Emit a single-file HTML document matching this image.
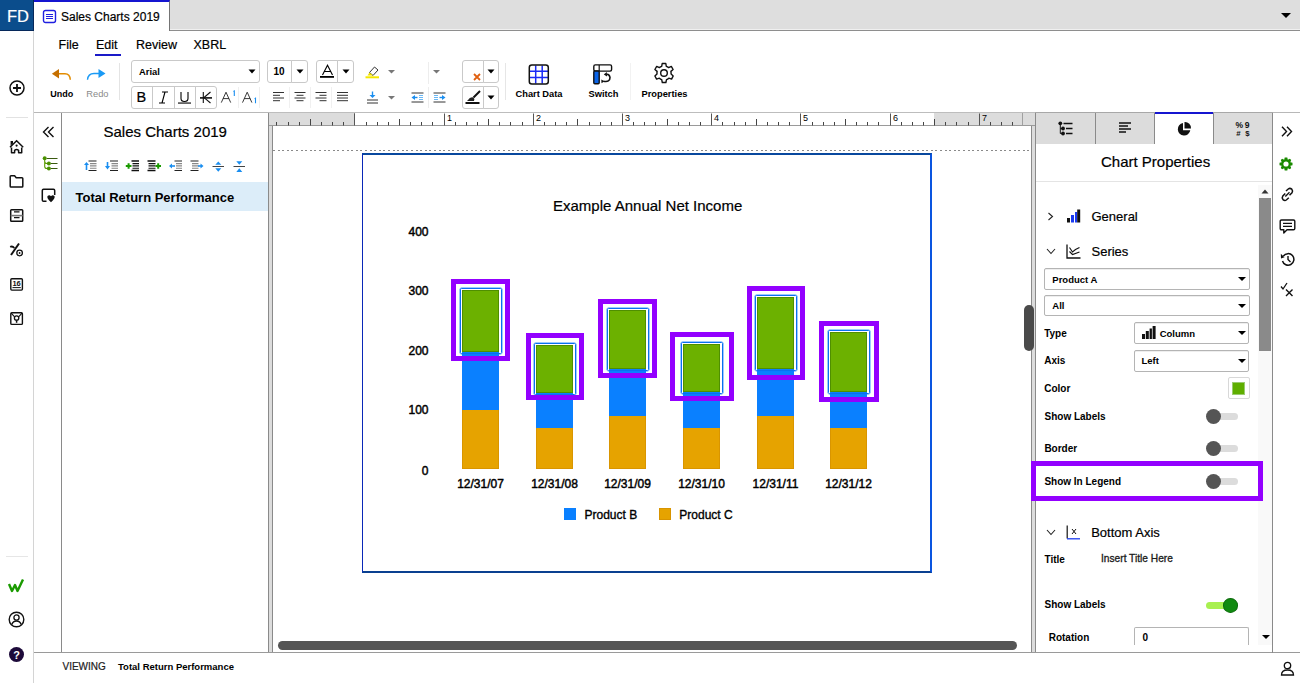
<!DOCTYPE html>
<html><head><meta charset="utf-8">
<style>
*{margin:0;padding:0;box-sizing:border-box}
html,body{width:1300px;height:683px;overflow:hidden;background:#fff;font-family:"Liberation Sans",sans-serif;color:#000}
.a{position:absolute}
.t{position:absolute;line-height:1;white-space:nowrap;-webkit-text-stroke:0.2px currentColor}
.t.b,.t[style*="font-weight:bold"]{-webkit-text-stroke:0}
.b{font-weight:bold}
svg{position:absolute;overflow:visible}
.box{position:absolute;border:1px solid #c9c9c9;border-radius:3px;background:#fff}
.sep{position:absolute;width:1px;background:#e6e6e6}
.tri{position:absolute;width:0;height:0;border-left:4px solid transparent;border-right:4px solid transparent;border-top:4px solid #000}
.trig{position:absolute;width:0;height:0;border-left:4px solid transparent;border-right:4px solid transparent;border-top:4px solid #777}
</style></head><body>

<!-- TOP BAR -->
<div class="a" style="left:0;top:0;width:1300px;height:31px;background:#dedede;border-bottom:1px solid #8e8e8e"></div>
<div class="a" style="left:170px;top:29px;width:1130px;height:1px;background:#f0f0f0"></div>
<div class="a" style="left:0;top:0;width:34px;height:31px;background:#0b4d8c;border-right:1px solid #06285a;border-bottom:1px solid #06285a"></div>
<div class="t" style="left:7px;top:7.5px;font-size:16.5px;color:#fff">FD</div>
<div class="a" style="left:34px;top:0;width:136px;height:31px;background:#fff;border-top:2px solid #1515d0;border-right:1px solid #747474"></div>
<svg style="left:42px;top:9px" width="15" height="15" viewBox="0 0 15 15"><rect x="1.5" y="1.5" width="12" height="12" rx="2" fill="none" stroke="#2020e0" stroke-width="1.4"/><path d="M4 5.5h7M4 7.5h7M4 9.5h7" stroke="#2020e0" stroke-width="1.2"/></svg>
<div class="t" style="left:61px;top:10.6px;font-size:12px">Sales Charts 2019</div>
<div class="tri" style="left:1281px;top:13px;border-left-width:5px;border-right-width:5px;border-top-width:5px"></div>

<!-- LEFT SIDEBAR -->
<div class="a" style="left:33px;top:31px;width:1px;height:652px;background:#d4d4d4"></div>

<!-- MENU -->
<div class="t" style="left:58.5px;top:38.6px;font-size:12.5px">File</div>
<div class="t" style="left:96px;top:38.6px;font-size:12.5px">Edit</div>
<div class="a" style="left:95px;top:53.5px;width:26px;height:2px;background:#1a1ac8"></div>
<div class="t" style="left:136px;top:38.6px;font-size:12.5px">Review</div>
<div class="t" style="left:193.5px;top:38.6px;font-size:12.5px">XBRL</div>

<!-- TOOLBAR -->
<svg style="left:51px;top:68px" width="21" height="14" viewBox="0 0 21 14"><path d="M7 5.7 H14 Q19 5.7 19.3 11.8" fill="none" stroke="#e38c00" stroke-width="1.5"/><path d="M0.9 5.7 L8 1 L8 10.5 Z" fill="#c56f00"/></svg>
<div class="t b" style="left:50.3px;top:89.8px;font-size:9px">Undo</div>
<svg style="left:86px;top:68px" width="21" height="14" viewBox="0 0 21 14"><path d="M14 5.5 H8 Q2 5.5 1.5 11.8" fill="none" stroke="#1a9af5" stroke-width="1.4"/><path d="M19.5 5.5 L12.5 1 L12.5 10 Z" fill="#1a9af5"/></svg>
<div class="t" style="left:86.3px;top:89.6px;font-size:9.3px;color:#8a8a8a;-webkit-text-stroke:0">Redo</div>
<div class="sep" style="left:119px;top:63px;height:37px;background:#e4e4e4"></div>

<div class="box" style="left:131px;top:60px;width:129px;height:23px"></div>
<div class="t" style="left:139px;top:67px;font-size:9.4px;font-weight:bold">Arial</div>
<svg style="left:248px;top:69px" width="8" height="5" viewBox="0 0 8 5"><path d="M0.5 0.5 H7.5 L4 4.5 Z" fill="#000"/></svg>

<div class="box" style="left:267px;top:60px;width:25px;height:23px;border-radius:3px 0 0 3px"></div>
<div class="box" style="left:291px;top:60px;width:17px;height:23px;border-radius:0 3px 3px 0"></div>
<div class="t b" style="left:273.5px;top:66.5px;font-size:10px">10</div>
<svg style="left:296px;top:69px" width="8" height="5" viewBox="0 0 8 5"><path d="M0.5 0.5 H7.5 L4 4.5 Z" fill="#000"/></svg>

<div class="box" style="left:316px;top:60px;width:22px;height:23px;border-radius:3px 0 0 3px"></div>
<div class="box" style="left:337px;top:60px;width:17px;height:23px;border-radius:0 3px 3px 0"></div>
<svg style="left:320px;top:64px" width="15" height="14" viewBox="0 0 15 14"><path d="M2.5 11 L7.5 1.2 L12.5 11 M4.3 7.5 H10.7" fill="none" stroke="#000" stroke-width="1.1"/><rect x="0" y="12" width="14" height="1.8" fill="#000"/></svg>
<svg style="left:342px;top:69px" width="8" height="5" viewBox="0 0 8 5"><path d="M0.5 0.5 H7.5 L4 4.5 Z" fill="#000"/></svg>

<!-- highlighter -->
<svg style="left:364px;top:65px" width="17" height="14" viewBox="0 0 17 14"><path d="M5.5 7.5 L10.5 2 L14 5 L9 10.5 Z" fill="#fff" stroke="#333" stroke-width="1"/><path d="M5.5 7.5 L9 10.5 L6 10.5 L3.5 10.5 Z" fill="#f0e000"/><rect x="1.5" y="11.3" width="13.5" height="2" fill="#f5e800"/></svg>
<svg style="left:388px;top:70px" width="7" height="4" viewBox="0 0 7 4"><path d="M0 0 H7 L3.5 3.5 Z" fill="#777"/></svg>
<div class="sep" style="left:428px;top:62px;height:22px;background:#ededed"></div>
<svg style="left:433px;top:70px" width="7" height="4" viewBox="0 0 7 4"><path d="M0 0 H7 L3.5 3.5 Z" fill="#777"/></svg>

<div class="box" style="left:462px;top:60px;width:22px;height:23px;border-radius:3px 0 0 3px"></div>
<div class="box" style="left:483px;top:60px;width:16px;height:23px;border-radius:0 3px 3px 0"></div>
<svg style="left:473px;top:72.5px" width="8" height="8" viewBox="0 0 8 8"><path d="M1 1 L7 7 M7 1 L1 7" stroke="#e06010" stroke-width="1.8"/></svg>
<svg style="left:487px;top:69px" width="8" height="5" viewBox="0 0 8 5"><path d="M0.5 0.5 H7.5 L4 4.5 Z" fill="#000"/></svg>

<!-- row 2 -->
<div class="box" style="left:131px;top:86px;width:22px;height:23px;border-radius:3px 0 0 3px"></div>
<div class="box" style="left:152px;top:86px;width:23px;height:23px;border-radius:0"></div>
<div class="box" style="left:174px;top:86px;width:22px;height:23px;border-radius:0"></div>
<div class="box" style="left:195px;top:86px;width:22px;height:23px;border-radius:0 3px 3px 0"></div>
<div class="t" style="left:136.5px;top:90.3px;font-size:14.5px">B</div>
<svg style="left:157px;top:91px" width="13" height="13" viewBox="0 0 13 13"><path d="M5 1 H11 M8 1 L5 12 M2 12 H8" fill="none" stroke="#000" stroke-width="1.1"/></svg>
<svg style="left:177px;top:91px" width="15" height="13" viewBox="0 0 15 13"><path d="M4 1 V7.5 Q4 10.5 7.5 10.5 Q11 10.5 11 7.5 V1" fill="none" stroke="#000" stroke-width="1.1"/><rect x="1" y="11.5" width="13" height="1.1" fill="#000"/></svg>
<svg style="left:197px;top:89px" width="18" height="16" viewBox="197 89 18 16"><path d="M203.3 92 V103 M210.5 92 L204 97.6 L210.5 103" fill="none" stroke="#111" stroke-width="1.1"/><path d="M200 97.9 H212" stroke="#111" stroke-width="1.6"/></svg>
<svg style="left:219px;top:89px" width="40" height="16" viewBox="219 89 40 16"><path d="M221.3 102.6 L226 92.2 L230.7 102.6 M223 98.6 H229" fill="none" stroke="#222" stroke-width="0.9"/><path d="M233.4 91.5 L234.3 91 V96" fill="none" stroke="#1a8ef0" stroke-width="1.1"/><path d="M242.5 102.6 L247.2 92.2 L251.9 102.6 M244.2 98.6 H250.2" fill="none" stroke="#222" stroke-width="0.9"/><path d="M254.6 98.8 L255.5 98.3 V103.3" fill="none" stroke="#1a8ef0" stroke-width="1.1"/></svg>
<div class="sep" style="left:238px;top:87px;height:21px;background:#efefef"></div>

<div class="sep" style="left:259px;top:87px;height:21px;background:#efefef"></div>

<svg style="left:272px;top:91px" width="80" height="11" viewBox="0 0 80 11"><g stroke="#333" stroke-width="1"><path d="M1 1.5 H12 M1 4.3 H8 M1 7 H12 M1 9.7 H8"/><path d="M22.5 1.5 H33.5 M24.5 4.3 H31.5 M22.5 7 H33.5 M24.5 9.7 H31.5"/><path d="M43.5 1.5 H54.5 M47.5 4.3 H54.5 M43.5 7 H54.5 M47.5 9.7 H54.5"/><path d="M65 1.5 H76 M65 4.3 H76 M65 7 H76 M65 9.7 H76"/></g></svg>
<div class="sep" style="left:289px;top:87px;height:21px;background:#f0f0f0"></div>
<div class="sep" style="left:310px;top:87px;height:21px;background:#f0f0f0"></div>
<div class="sep" style="left:331px;top:87px;height:21px;background:#f0f0f0"></div>

<svg style="left:366px;top:91px" width="13" height="13" viewBox="0 0 13 13"><path d="M6.5 0.5 V5" stroke="#1a8ef0" stroke-width="1.4"/><path d="M3.5 4 H9.5 L6.5 7 Z" fill="#1a8ef0"/><path d="M1 9 H12 M1 12 H12" stroke="#333" stroke-width="1"/></svg>
<svg style="left:388px;top:96px" width="7" height="4" viewBox="0 0 7 4"><path d="M0 0 H7 L3.5 3.5 Z" fill="#777"/></svg>
<svg style="left:411px;top:92px" width="13" height="11" viewBox="0 0 13 11"><path d="M0.5 1 H12.5 M0.5 10 H12.5" stroke="#333" stroke-width="1"/><path d="M0.5 5.5 L4 3 V8 Z" fill="#1a8ef0"/><path d="M3 5.5 H6.5" stroke="#1a8ef0" stroke-width="1.4"/><path d="M8 3.5 H12 M8 5.5 H12 M8 7.5 H12" stroke="#6ab8f5" stroke-width="1.2"/></svg>
<div class="sep" style="left:428px;top:87px;height:21px;background:#ededed"></div>
<svg style="left:433px;top:92px" width="13" height="11" viewBox="0 0 13 11"><path d="M0.5 1 H12.5 M0.5 10 H12.5" stroke="#333" stroke-width="1"/><path d="M12.5 5.5 L9 3 V8 Z" fill="#1a8ef0"/><path d="M6.5 5.5 H10" stroke="#1a8ef0" stroke-width="1.4"/><path d="M1 3.5 H5 M1 5.5 H5 M1 7.5 H5" stroke="#6ab8f5" stroke-width="1.2"/></svg>

<div class="box" style="left:462px;top:86px;width:22px;height:23px;border-radius:3px 0 0 3px"></div>
<div class="box" style="left:483px;top:86px;width:16px;height:23px;border-radius:0 3px 3px 0"></div>
<svg style="left:465px;top:90px" width="16" height="15" viewBox="0 0 16 15"><path d="M15 1 L8.5 7.5" stroke="#111" stroke-width="2"/><path d="M8.5 7.5 Q5 6.5 3 10 L2 11 H9 Q10 9 8.5 7.5 Z" fill="#222"/><rect x="0.5" y="12" width="14" height="2" fill="#111"/></svg>
<svg style="left:487px;top:95px" width="8" height="5" viewBox="0 0 8 5"><path d="M0.5 0.5 H7.5 L4 4.5 Z" fill="#000"/></svg>

<div class="sep" style="left:505px;top:63px;height:37px;background:#e6e6e6"></div>
<svg style="left:527px;top:63px" width="23" height="23" viewBox="527 63 23 23"><path d="M535.7 65.5 V83.5 M542.2 65.5 V83.5 M529.5 71.2 H548 M529.5 77.6 H548" stroke="#1a2af5" stroke-width="1.5"/><rect x="529.3" y="64.9" width="19" height="19" rx="2.5" fill="none" stroke="#111" stroke-width="1.5"/></svg>
<div class="t b" style="left:515.5px;top:89.7px;font-size:9.3px">Chart Data</div>
<svg style="left:591px;top:63px" width="23" height="23" viewBox="591 63 23 23"><rect x="593.8" y="64.9" width="17.8" height="6.2" rx="1.5" fill="#fff" stroke="#111" stroke-width="1.4"/><path d="M599.2 65 V71" stroke="#111" stroke-width="1.2"/><rect x="593.8" y="71" width="5.4" height="12.8" rx="1" fill="#0a64e8" stroke="#111" stroke-width="1.4"/><path d="M603.5 81.2 Q610 82.5 610 77.5 Q609.5 74 606.5 74.3" fill="none" stroke="#111" stroke-width="1.6"/><path d="M606.8 72 L603.8 74.5 L607 76.6 Z" fill="#111"/><path d="M601.3 79.5 L604.5 81.2 L601.5 83.2 Z" fill="#111"/></svg>
<div class="t b" style="left:588.5px;top:89.7px;font-size:9.3px">Switch</div>
<div class="sep" style="left:630px;top:63px;height:37px;background:#f2f2f2"></div>
<svg style="left:652px;top:62px" width="24" height="24" viewBox="0 0 24 24"><path d="M10.2 1.5 H13.8 L14.3 4.4 Q15.6 4.9 16.6 5.6 L19.3 4.4 L21.1 7.5 L18.9 9.4 Q19.1 10.6 19.1 12 L21.2 13.9 L19.6 17.1 L16.8 16.2 Q15.8 17.1 14.5 17.6 L13.9 20.5 H10.3 L9.7 17.6 Q8.4 17.1 7.4 16.2 L4.6 17.1 L2.9 14 L5 12 Q4.9 10.6 5.1 9.4 L2.9 7.5 L4.7 4.4 L7.4 5.6 Q8.4 4.9 9.7 4.4 Z" fill="none" stroke="#111" stroke-width="1.4" stroke-linejoin="round"/><circle cx="12" cy="11" r="3.3" fill="none" stroke="#111" stroke-width="1.4"/></svg>
<div class="t b" style="left:641.5px;top:89.7px;font-size:9.3px">Properties</div>

<div class="a" style="left:34px;top:112px;width:1266px;height:1px;background:#b8b8b8"></div>


<!-- SIDEBAR ICONS -->
<svg style="left:9px;top:80px" width="16" height="16" viewBox="0 0 16 16"><circle cx="8" cy="8" r="7" fill="none" stroke="#111" stroke-width="1.5"/><path d="M8 4 V12 M4 8 H12" stroke="#111" stroke-width="1.8"/></svg>
<div class="a" style="left:6px;top:117px;width:22px;height:1px;background:#e2e2e2"></div>
<svg style="left:8px;top:138px" width="18" height="18" viewBox="8 138 18 18"><path d="M10 147.3 L16.6 140.8 L23.2 147.3" fill="none" stroke="#111" stroke-width="1.5"/><path d="M10.6 141 H13 V143.5 L10.6 145.8 Z" fill="#111"/><circle cx="16.6" cy="145.6" r="1.1" fill="#111"/><path d="M11.5 147.5 V152.7 H14.6 V150.3 Q16.6 148.8 18.6 150.3 V152.7 H21.7 V147.5" fill="none" stroke="#111" stroke-width="1.5" stroke-linejoin="round"/></svg>
<svg style="left:8px;top:173px" width="18" height="17" viewBox="8 173 18 17"><path d="M11 175.7 H14.6 L16.2 177.7 H22 Q22.8 177.7 22.8 178.5 V186.2 Q22.8 187 22 187 H11 Q10.2 187 10.2 186.2 V176.5 Q10.2 175.7 11 175.7 Z" fill="none" stroke="#111" stroke-width="1.5" stroke-linejoin="round"/></svg>
<svg style="left:8px;top:207px" width="18" height="17" viewBox="8 207 18 17"><rect x="10.7" y="209.7" width="12" height="11.6" rx="0.8" fill="none" stroke="#111" stroke-width="1.5"/><path d="M10.7 215.6 H22.7" stroke="#777" stroke-width="1.6"/><path d="M14 211.8 H19.5 M14 217.6 H19.5" stroke="#111" stroke-width="1.2"/></svg>
<svg style="left:8px;top:241px" width="18" height="18" viewBox="8 241 18 18"><path d="M10.2 246.8 Q12.5 245.6 14.3 248" fill="none" stroke="#111" stroke-width="1.9"/><path d="M11 255 L19 243.5" stroke="#111" stroke-width="2"/><circle cx="19.6" cy="253" r="2.8" fill="none" stroke="#111" stroke-width="1.3"/><circle cx="19.6" cy="253" r="0.9" fill="#111"/></svg>
<svg style="left:8px;top:276px" width="18" height="17" viewBox="8 276 18 17"><rect x="10.8" y="278.7" width="11.6" height="11.4" rx="1" fill="none" stroke="#111" stroke-width="1.4"/><path d="M12.5 287.6 H20.8" stroke="#111" stroke-width="1"/><text x="16.6" y="286" font-size="7.5" font-family="Liberation Sans" font-weight="bold" text-anchor="middle" fill="#111">16</text></svg>
<svg style="left:8px;top:310px" width="18" height="17" viewBox="8 310 18 17"><rect x="10.8" y="312.7" width="11.6" height="11.7" rx="1" fill="none" stroke="#111" stroke-width="1.4"/><path d="M11.2 313.2 L14.6 316.8 M22 313.2 L18.6 316.8" stroke="#111" stroke-width="1.1"/><circle cx="16.6" cy="318" r="2.2" fill="none" stroke="#111" stroke-width="1.3"/><path d="M16.6 320.2 V322.8" stroke="#111" stroke-width="1.5"/></svg>
<div class="a" style="left:6px;top:556px;width:22px;height:1px;background:#e6e6e6"></div>
<svg style="left:8px;top:578px" width="16" height="15" viewBox="0 0 16 15"><path d="M1 6 L4 13 L7 7 L9.5 13 L15 1.5" fill="none" stroke="#1a9a00" stroke-width="2.4" stroke-linejoin="round"/></svg>
<svg style="left:8px;top:611px" width="17" height="17" viewBox="0 0 17 17"><circle cx="8.5" cy="8.5" r="7.3" fill="none" stroke="#111" stroke-width="1.4"/><circle cx="8.5" cy="6.5" r="2.6" fill="none" stroke="#111" stroke-width="1.3"/><path d="M3.8 13.5 Q5 10 8.5 10 Q12 10 13.2 13.5" fill="none" stroke="#111" stroke-width="1.3"/></svg>
<svg style="left:8px;top:646px" width="17" height="17" viewBox="0 0 17 17"><circle cx="8.5" cy="8.5" r="7.5" fill="#1d0a3a"/><text x="8.5" y="12.5" font-size="11" font-family="Liberation Sans" font-weight="bold" text-anchor="middle" fill="#fff">?</text></svg>

<!-- SECOND COLUMN (panel icons) -->
<div class="a" style="left:61px;top:113px;width:1px;height:540px;background:#8a8a8a"></div>
<svg style="left:42px;top:126px" width="13" height="12" viewBox="0 0 13 12"><path d="M6.5 1 L1.5 6 L6.5 11 M11.5 1 L6.5 6 L11.5 11" fill="none" stroke="#111" stroke-width="1.4"/></svg>
<svg style="left:42px;top:155px" width="17" height="16" viewBox="42 155 17 16"><path d="M44.7 158.5 V161.5 Q44.7 163.5 47 163.5 H48.9 M44.7 161.5 V166.5 Q44.7 168.5 47 168.5 H48.9" fill="none" stroke="#5a9a00" stroke-width="1.1"/><circle cx="44.7" cy="158.3" r="2" fill="#4a9000"/><circle cx="48.9" cy="163.5" r="2" fill="#4a9000"/><circle cx="48.9" cy="168.5" r="2" fill="#4a9000"/><path d="M47 158.5 H57.5 M51 163.5 H57.5 M51 168.5 H57.5" stroke="#3a5a10" stroke-width="1.2"/></svg>
<svg style="left:40px;top:187px" width="17" height="17" viewBox="40 187 17 17"><path d="M46.5 201.3 H43.5 Q42.3 201.3 42.3 200 V190.5 Q42.3 189.3 43.5 189.3 H53.5 Q54.7 189.3 54.7 190.5 V195" fill="none" stroke="#111" stroke-width="1.5"/><path d="M51 196.3 Q52.6 194.4 54.4 196 Q55.8 197.8 51 202.2 Q46.2 197.8 47.6 196 Q49.4 194.4 51 196.3 Z" fill="#111"/></svg>

<!-- NAV PANEL -->
<div class="a" style="left:62px;top:182px;width:206px;height:29px;background:#dcedf9"></div>
<div class="t" style="left:103.5px;top:123.8px;font-size:15px">Sales Charts 2019</div>
<svg style="left:80px;top:157px" width="170" height="18" viewBox="80 157 170 18"><path d="M88.5 161 H96.5 M88.5 170.5 H96.5" stroke="#222" stroke-width="1.1"/><path d="M90.0 163.6 H96.5 M90.0 165.9 H96.5 M90.0 168.2 H96.5" stroke="#888" stroke-width="1.1"/><path d="M86.5 170 V163.5" stroke="#1a8ef0" stroke-width="1.6"/><path d="M84 165 L86.5 162 L89 165 Z" fill="#1a8ef0"/><path d="M110 161 H118 M110 170.5 H118" stroke="#222" stroke-width="1.1"/><path d="M111.5 163.6 H118 M111.5 165.9 H118 M111.5 168.2 H118" stroke="#888" stroke-width="1.1"/><path d="M107.5 162 V167.5" stroke="#1a8ef0" stroke-width="1.6"/><path d="M105 166 L107.5 169.5 L110 166 Z" fill="#1a8ef0"/><path d="M131.5 161 H139 M131.5 170.5 H139" stroke="#111" stroke-width="1.3"/><path d="M132.5 163.6 H139 M132.5 165.9 H139 M132.5 168.2 H139" stroke="#111" stroke-width="1.1"/><path d="M125.8 166 H131.5 M128.6 163.2 V168.8" stroke="#1a9a00" stroke-width="2"/><path d="M147.5 161 H155.5 M147.5 170.5 H155.5" stroke="#111" stroke-width="1.3"/><path d="M148.5 163.6 H155.5 M148.5 165.9 H155.5 M148.5 168.2 H155.5" stroke="#111" stroke-width="1.1"/><path d="M155.5 166 H161 M158.2 163.2 V168.8" stroke="#1a9a00" stroke-width="2"/><path d="M174.5 161 H182 M174.5 170.5 H182" stroke="#222" stroke-width="1.1"/><path d="M176.0 163.6 H182 M176.0 165.9 H182 M176.0 168.2 H182" stroke="#888" stroke-width="1.1"/><path d="M170.5 166 H175" stroke="#1a8ef0" stroke-width="1.6"/><path d="M172 163.5 L169 166 L172 168.5 Z" fill="#1a8ef0"/><path d="M190.5 161 H198.5 M190.5 170.5 H198.5" stroke="#222" stroke-width="1.1"/><path d="M192.0 163.6 H198.5 M192.0 165.9 H198.5 M192.0 168.2 H198.5" stroke="#888" stroke-width="1.1"/><path d="M198 166 H202" stroke="#1a8ef0" stroke-width="1.6"/><path d="M200.5 163.5 L203.5 166 L200.5 168.5 Z" fill="#1a8ef0"/><path d="M212.5 166.5 H224" stroke="#444" stroke-width="1"/><path d="M215.3 164.8 L218.3 161.5 L221.3 164.8 Z M215.3 168.2 L218.3 171.8 L221.3 168.2 Z" fill="#1a8ef0"/><path d="M233.5 166.5 H245" stroke="#444" stroke-width="1"/><path d="M236.3 161.2 H242.3 L239.3 164.8 Z M236.3 172 H242.3 L239.3 168.2 Z" fill="#1a8ef0"/></svg>
<div class="t b" style="left:75.5px;top:190.5px;font-size:13px">Total Return Performance</div>
<div class="a" style="left:268px;top:113px;width:1px;height:540px;background:#8a8a8a"></div>
<div class="a" style="left:269px;top:126px;width:4px;height:527px;background:#dcdcdc;border-right:1px solid #8a8a8a"></div>

<!-- RULER -->
<div class="a" style="left:269px;top:112px;width:766px;height:14px;background:#fff;border-top:1px solid #bdbdbd;border-bottom:1px solid #9a9a9a"></div>
<div class="a" style="left:269px;top:113px;width:86px;height:12px;background:#dcdcdc;border-right:1px solid #a0a0a0"></div>
<div class="a" style="left:934px;top:113px;width:101px;height:12px;background:#dcdcdc"></div>
<div class="a" style="left:1022px;top:113px;width:1px;height:12px;background:#a0a0a0"></div>
<svg style="left:269px;top:113px" width="766" height="14" viewBox="0 0 766 14">
<path d="M7.5 9 V12.5" stroke="#444" stroke-width="1"/>
<path d="M19.5 9 V12.5" stroke="#444" stroke-width="1"/>
<path d="M30.5 9 V12.5" stroke="#444" stroke-width="1"/>
<path d="M41.5 6 V12.5" stroke="#444" stroke-width="1"/>
<path d="M52.5 9 V12.5" stroke="#444" stroke-width="1"/>
<path d="M63.5 9 V12.5" stroke="#444" stroke-width="1"/>
<path d="M74.5 9 V12.5" stroke="#444" stroke-width="1"/>
<path d="M85.5 0.5 V12.5" stroke="#555" stroke-width="1"/>
<path d="M97.5 9 V12.5" stroke="#444" stroke-width="1"/>
<path d="M108.5 9 V12.5" stroke="#444" stroke-width="1"/>
<path d="M119.5 9 V12.5" stroke="#444" stroke-width="1"/>
<path d="M130.5 6 V12.5" stroke="#444" stroke-width="1"/>
<path d="M141.5 9 V12.5" stroke="#444" stroke-width="1"/>
<path d="M152.5 9 V12.5" stroke="#444" stroke-width="1"/>
<path d="M163.5 9 V12.5" stroke="#444" stroke-width="1"/>
<path d="M175.5 0.5 V12.5" stroke="#555" stroke-width="1"/>
<text x="178.0" y="7.8" font-size="9" font-family="Liberation Sans" fill="#000">1</text>
<path d="M186.5 9 V12.5" stroke="#444" stroke-width="1"/>
<path d="M197.5 9 V12.5" stroke="#444" stroke-width="1"/>
<path d="M208.5 9 V12.5" stroke="#444" stroke-width="1"/>
<path d="M219.5 6 V12.5" stroke="#444" stroke-width="1"/>
<path d="M230.5 9 V12.5" stroke="#444" stroke-width="1"/>
<path d="M241.5 9 V12.5" stroke="#444" stroke-width="1"/>
<path d="M253.5 9 V12.5" stroke="#444" stroke-width="1"/>
<path d="M264.5 0.5 V12.5" stroke="#555" stroke-width="1"/>
<text x="267.0" y="7.8" font-size="9" font-family="Liberation Sans" fill="#000">2</text>
<path d="M275.5 9 V12.5" stroke="#444" stroke-width="1"/>
<path d="M286.5 9 V12.5" stroke="#444" stroke-width="1"/>
<path d="M297.5 9 V12.5" stroke="#444" stroke-width="1"/>
<path d="M308.5 6 V12.5" stroke="#444" stroke-width="1"/>
<path d="M320.5 9 V12.5" stroke="#444" stroke-width="1"/>
<path d="M331.5 9 V12.5" stroke="#444" stroke-width="1"/>
<path d="M342.5 9 V12.5" stroke="#444" stroke-width="1"/>
<path d="M353.5 0.5 V12.5" stroke="#555" stroke-width="1"/>
<text x="356.0" y="7.8" font-size="9" font-family="Liberation Sans" fill="#000">3</text>
<path d="M364.5 9 V12.5" stroke="#444" stroke-width="1"/>
<path d="M375.5 9 V12.5" stroke="#444" stroke-width="1"/>
<path d="M386.5 9 V12.5" stroke="#444" stroke-width="1"/>
<path d="M398.5 6 V12.5" stroke="#444" stroke-width="1"/>
<path d="M409.5 9 V12.5" stroke="#444" stroke-width="1"/>
<path d="M420.5 9 V12.5" stroke="#444" stroke-width="1"/>
<path d="M431.5 9 V12.5" stroke="#444" stroke-width="1"/>
<path d="M442.5 0.5 V12.5" stroke="#555" stroke-width="1"/>
<text x="445.0" y="7.8" font-size="9" font-family="Liberation Sans" fill="#000">4</text>
<path d="M453.5 9 V12.5" stroke="#444" stroke-width="1"/>
<path d="M465.5 9 V12.5" stroke="#444" stroke-width="1"/>
<path d="M476.5 9 V12.5" stroke="#444" stroke-width="1"/>
<path d="M487.5 6 V12.5" stroke="#444" stroke-width="1"/>
<path d="M498.5 9 V12.5" stroke="#444" stroke-width="1"/>
<path d="M509.5 9 V12.5" stroke="#444" stroke-width="1"/>
<path d="M520.5 9 V12.5" stroke="#444" stroke-width="1"/>
<path d="M531.5 0.5 V12.5" stroke="#555" stroke-width="1"/>
<text x="534.0" y="7.8" font-size="9" font-family="Liberation Sans" fill="#000">5</text>
<path d="M543.5 9 V12.5" stroke="#444" stroke-width="1"/>
<path d="M554.5 9 V12.5" stroke="#444" stroke-width="1"/>
<path d="M565.5 9 V12.5" stroke="#444" stroke-width="1"/>
<path d="M576.5 6 V12.5" stroke="#444" stroke-width="1"/>
<path d="M587.5 9 V12.5" stroke="#444" stroke-width="1"/>
<path d="M598.5 9 V12.5" stroke="#444" stroke-width="1"/>
<path d="M609.5 9 V12.5" stroke="#444" stroke-width="1"/>
<path d="M621.5 0.5 V12.5" stroke="#555" stroke-width="1"/>
<text x="624.0" y="7.8" font-size="9" font-family="Liberation Sans" fill="#000">6</text>
<path d="M632.5 9 V12.5" stroke="#444" stroke-width="1"/>
<path d="M643.5 9 V12.5" stroke="#444" stroke-width="1"/>
<path d="M654.5 9 V12.5" stroke="#444" stroke-width="1"/>
<path d="M665.5 6 V12.5" stroke="#444" stroke-width="1"/>
<path d="M676.5 9 V12.5" stroke="#444" stroke-width="1"/>
<path d="M687.5 9 V12.5" stroke="#444" stroke-width="1"/>
<path d="M699.5 9 V12.5" stroke="#444" stroke-width="1"/>
<path d="M710.5 0.5 V12.5" stroke="#555" stroke-width="1"/>
<text x="713.0" y="7.8" font-size="9" font-family="Liberation Sans" fill="#000">7</text>
<path d="M721.5 9 V12.5" stroke="#444" stroke-width="1"/>
<path d="M732.5 9 V12.5" stroke="#444" stroke-width="1"/>
<path d="M743.5 9 V12.5" stroke="#444" stroke-width="1"/>
</svg>

<!-- CANVAS -->
<div class="a" style="left:1031px;top:126px;width:5px;height:527px;background:#dcdcdc;border-left:1px solid #8a8a8a;border-right:1px solid #8a8a8a"></div>
<div class="a" style="left:273px;top:150px;width:758px;height:1px;background:repeating-linear-gradient(90deg,#8a8a8a 0 2px,transparent 2px 4.6px)"></div>
<div class="a" style="left:362px;top:153px;width:570px;height:420px;border:2px solid #0a55e0;border-top-color:#08489e;border-bottom-color:#0a4090;border-left:1.5px solid #0a28b8"></div>
<div class="a" style="left:278px;top:641px;width:739px;height:9px;background:#555;border-radius:5px"></div>
<div class="a" style="left:1024px;top:305px;width:10px;height:46px;background:#4a4a4a;border-radius:5px"></div>

<!-- FOOTER -->
<div class="a" style="left:34px;top:652px;width:1266px;height:1px;background:#9a9a9a"></div>
<div class="t" style="left:62.5px;top:662px;font-size:10px;color:#222">VIEWING</div>
<div class="t b" style="left:118px;top:662px;font-size:9.5px">Total Return Performance</div>
<svg style="left:1280px;top:661px" width="15" height="15" viewBox="0 0 15 15"><circle cx="7.5" cy="4.5" r="3.2" fill="none" stroke="#111" stroke-width="1.3"/><path d="M1.5 14 Q1.5 9 7.5 9 Q13.5 9 13.5 14 Z" fill="none" stroke="#111" stroke-width="1.3"/></svg>
<!-- CHART -->
<div class="t" style="left:553px;top:198.3px;font-size:15px">Example Annual Net Income</div>
<div class="t" style="right:871.5px;top:225.7px;font-size:12px;text-align:right;-webkit-text-stroke:0.45px #000">400</div>
<div class="t" style="right:871.5px;top:285.4px;font-size:12px;text-align:right;-webkit-text-stroke:0.45px #000">300</div>
<div class="t" style="right:871.5px;top:345.0px;font-size:12px;text-align:right;-webkit-text-stroke:0.45px #000">200</div>
<div class="t" style="right:871.5px;top:404.3px;font-size:12px;text-align:right;-webkit-text-stroke:0.45px #000">100</div>
<div class="t" style="right:871.5px;top:464.5px;font-size:12px;text-align:right;-webkit-text-stroke:0.45px #000">0</div>
<div class="a" style="left:462.3px;top:409.8px;width:36.5px;height:59.19999999999999px;background:#e6a300;border:1px solid #d99500;border-top:0"></div>
<div class="a" style="left:462.3px;top:351.8px;width:36.5px;height:58.0px;background:#0a80ff"></div>
<div class="a" style="left:462.3px;top:290.4px;width:36.5px;height:61.400000000000034px;background:#6cb100;border:1px solid #4f8f00"></div>
<div class="a" style="left:460.3px;top:288.0px;width:41.5px;height:66.0px;border:1px solid #0a70f0;box-shadow:0 0 0 0.5px rgba(10,120,255,0.8);border-radius:1.5px"></div>
<div class="a" style="left:536px;top:427.8px;width:36.5px;height:41.19999999999999px;background:#e6a300;border:1px solid #d99500;border-top:0"></div>
<div class="a" style="left:536px;top:393.1px;width:36.5px;height:34.69999999999999px;background:#0a80ff"></div>
<div class="a" style="left:536px;top:344.8px;width:36.5px;height:48.30000000000001px;background:#6cb100;border:1px solid #4f8f00"></div>
<div class="a" style="left:534.0px;top:343.0px;width:41.5px;height:52.0px;border:1px solid #0a70f0;box-shadow:0 0 0 0.5px rgba(10,120,255,0.8);border-radius:1.5px"></div>
<div class="a" style="left:609.3px;top:415.8px;width:36.5px;height:53.19999999999999px;background:#e6a300;border:1px solid #d99500;border-top:0"></div>
<div class="a" style="left:609.3px;top:369.3px;width:36.5px;height:46.5px;background:#0a80ff"></div>
<div class="a" style="left:609.3px;top:309.5px;width:36.5px;height:59.80000000000001px;background:#6cb100;border:1px solid #4f8f00"></div>
<div class="a" style="left:607.3px;top:308.0px;width:41.5px;height:63.0px;border:1px solid #0a70f0;box-shadow:0 0 0 0.5px rgba(10,120,255,0.8);border-radius:1.5px"></div>
<div class="a" style="left:683.2px;top:427.7px;width:36.5px;height:41.30000000000001px;background:#e6a300;border:1px solid #d99500;border-top:0"></div>
<div class="a" style="left:683.2px;top:392.4px;width:36.5px;height:35.30000000000001px;background:#0a80ff"></div>
<div class="a" style="left:683.2px;top:344.3px;width:36.5px;height:48.099999999999966px;background:#6cb100;border:1px solid #4f8f00"></div>
<div class="a" style="left:681.2px;top:342.0px;width:41.5px;height:52.0px;border:1px solid #0a70f0;box-shadow:0 0 0 0.5px rgba(10,120,255,0.8);border-radius:1.5px"></div>
<div class="a" style="left:757px;top:416.3px;width:36.5px;height:52.69999999999999px;background:#e6a300;border:1px solid #d99500;border-top:0"></div>
<div class="a" style="left:757px;top:368.6px;width:36.5px;height:47.69999999999999px;background:#0a80ff"></div>
<div class="a" style="left:757px;top:297.1px;width:36.5px;height:71.5px;background:#6cb100;border:1px solid #4f8f00"></div>
<div class="a" style="left:755.0px;top:295.0px;width:41.5px;height:76.0px;border:1px solid #0a70f0;box-shadow:0 0 0 0.5px rgba(10,120,255,0.8);border-radius:1.5px"></div>
<div class="a" style="left:830px;top:428px;width:36.5px;height:41px;background:#e6a300;border:1px solid #d99500;border-top:0"></div>
<div class="a" style="left:830px;top:392.3px;width:36.5px;height:35.69999999999999px;background:#0a80ff"></div>
<div class="a" style="left:830px;top:332.3px;width:36.5px;height:60.0px;background:#6cb100;border:1px solid #4f8f00"></div>
<div class="a" style="left:828.0px;top:330.0px;width:41.5px;height:64.0px;border:1px solid #0a70f0;box-shadow:0 0 0 0.5px rgba(10,120,255,0.8);border-radius:1.5px"></div>
<div class="a" style="left:451px;top:279px;width:59px;height:82px;border:5px solid #9300ff"></div>
<div class="a" style="left:525.5px;top:333px;width:58.5px;height:67px;border:5px solid #9300ff"></div>
<div class="a" style="left:598px;top:299px;width:59px;height:79px;border:5px solid #9300ff"></div>
<div class="a" style="left:670px;top:332px;width:63.5px;height:69px;border:5px solid #9300ff"></div>
<div class="a" style="left:746.5px;top:286px;width:58.5px;height:93.5px;border:5px solid #9300ff"></div>
<div class="a" style="left:818.5px;top:320.5px;width:60.5px;height:81.0px;border:5px solid #9300ff"></div>
<div class="t" style="left:440.5px;width:80px;text-align:center;top:478.4px;font-size:12px;-webkit-text-stroke:0.45px #000">12/31/07</div>
<div class="t" style="left:514.5px;width:80px;text-align:center;top:478.4px;font-size:12px;-webkit-text-stroke:0.45px #000">12/31/08</div>
<div class="t" style="left:587.5px;width:80px;text-align:center;top:478.4px;font-size:12px;-webkit-text-stroke:0.45px #000">12/31/09</div>
<div class="t" style="left:661.5px;width:80px;text-align:center;top:478.4px;font-size:12px;-webkit-text-stroke:0.45px #000">12/31/10</div>
<div class="t" style="left:735.5px;width:80px;text-align:center;top:478.4px;font-size:12px;-webkit-text-stroke:0.45px #000">12/31/11</div>
<div class="t" style="left:808.5px;width:80px;text-align:center;top:478.4px;font-size:12px;-webkit-text-stroke:0.45px #000">12/31/12</div>
<div class="a" style="left:564px;top:508px;width:12.4px;height:12px;background:#0a80ff"></div>
<div class="t" style="left:584.5px;top:509.2px;font-size:12px;-webkit-text-stroke:0.35px #000">Product B</div>
<div class="a" style="left:659.3px;top:508px;width:12px;height:12px;background:#e6a300;border:1px solid #d89400"></div>
<div class="t" style="left:679.3px;top:509.2px;font-size:12px;-webkit-text-stroke:0.35px #000">Product C</div>
<!-- RIGHTPANEL -->
<div class="a" style="left:1035px;top:112px;width:238px;height:32px;background:#dcdcdc;border-top:1px solid #a8a8a8"></div>
<div class="a" style="left:1095px;top:113px;width:1px;height:31px;background:#8a8a8a"></div>
<div class="a" style="left:1154px;top:113px;width:1px;height:31px;background:#8a8a8a"></div>
<div class="a" style="left:1213px;top:113px;width:1px;height:31px;background:#8a8a8a"></div>
<div class="a" style="left:1272px;top:113px;width:1px;height:31px;background:#8a8a8a"></div>
<div class="a" style="left:1155px;top:112px;width:58px;height:32px;background:#fff;border-top:2px solid #1515d0"></div>
<div class="a" style="left:1036px;top:144px;width:236px;height:508px;background:#fff"></div>
<div class="a" style="left:1258px;top:185px;width:14px;height:460px;background:#f9f9f9"></div>
<div class="a" style="left:1035px;top:113px;width:1px;height:31px;background:#8a8a8a"></div>
<svg style="left:1058px;top:121px" width="16" height="15" viewBox="0 0 16 15"><circle cx="2.3" cy="2.3" r="1.9" fill="#111"/><circle cx="5" cy="7.5" r="1.9" fill="#111"/><circle cx="5" cy="12.5" r="1.9" fill="#111"/><path d="M2.3 2.3 V7.5 H5 M2.3 7.5 V12.5 H5" fill="none" stroke="#111" stroke-width="1"/><path d="M5.5 2.5 H14.5 M8 7.5 H14.5 M8 12.5 H14.5" stroke="#111" stroke-width="1.6"/></svg>
<svg style="left:1118px;top:122px" width="14" height="12" viewBox="0 0 14 12"><path d="M1 1 H13 M1 4 H10 M1 7 H13 M1 10 H8" stroke="#111" stroke-width="1.5"/></svg>
<svg style="left:1176px;top:121px" width="16" height="16" viewBox="0 0 16 16"><path d="M7 2 A6.3 6.3 0 1 0 14.3 9.3 H7 Z" fill="#111"/><path d="M8.5 1 A6 6 0 0 1 15 7.5 H8.5 Z" fill="#111"/></svg>
<svg style="left:1234px;top:119px" width="20" height="20" viewBox="1234 119 20 20"><g font-family="Liberation Sans" font-weight="bold" font-size="8.6" fill="#111"><text x="1235.6" y="128.4" textLength="7.6" lengthAdjust="spacingAndGlyphs">%</text><text x="1244.8" y="128.4">9</text><text x="1236.3" y="136.2" font-size="7.8">#</text><text x="1245.2" y="136.4" font-size="7.8">$</text></g></svg>
<div class="a" style="left:1272px;top:113px;width:1px;height:540px;background:#8a8a8a"></div>
<div class="t" style="left:1101px;top:154.3px;font-size:15px;">Chart Properties</div>
<div class="a" style="left:1036px;top:181px;width:236px;height:1px;background:#e4e4e4"></div>
<svg style="left:1261px;top:189px" width="8" height="5" viewBox="0 0 8 5"><path d="M0.5 4.5 H7.5 L4 0.5 Z" fill="#333"/></svg>
<div class="a" style="left:1259px;top:198px;width:12px;height:153px;background:#8a8a8a"></div>
<svg style="left:1047px;top:212px" width="8" height="9" viewBox="0 0 8 9"><path d="M1.5 1 L5.5 4.5 L1.5 8" fill="none" stroke="#222" stroke-width="1.1"/></svg>
<svg style="left:1066px;top:209px" width="15" height="14" viewBox="0 0 15 14"><rect x="1" y="9" width="3" height="4.5" fill="#111"/><rect x="5" y="6" width="3" height="7.5" fill="#1a3af0"/><rect x="9" y="3" width="2.2" height="10.5" fill="#1a3af0"/><rect x="11.2" y="0.5" width="3" height="13" fill="#111"/></svg>
<div class="t" style="left:1091.5px;top:210.3px;font-size:13px;">General</div>
<svg style="left:1046px;top:248px" width="10" height="7" viewBox="0 0 10 7"><path d="M1 1 L5 5.5 L9 1" fill="none" stroke="#222" stroke-width="1.1"/></svg>
<svg style="left:1066px;top:244px" width="15" height="15" viewBox="0 0 15 15"><path d="M1 0.5 V14 H14.5" fill="none" stroke="#111" stroke-width="1.3"/><path d="M3.5 3.5 L6.5 8 L9.5 5.5 L13.5 3.5 M3.5 7.5 L6.5 10.5 L13.5 8" fill="none" stroke="#111" stroke-width="1.1"/></svg>
<div class="t" style="left:1091.5px;top:245.3px;font-size:13px;">Series</div>
<div class="box" style="left:1044px;top:268px;width:205.5px;height:21.5px;border-color:#b4b4b4;border-radius:2px;box-shadow:inset 0 1px 0 #eee"></div>
<div class="t" style="left:1052.3px;top:274.5px;font-size:9.5px;font-weight:bold">Product A</div>
<svg style="left:1237.5px;top:276.95px" width="8" height="4" viewBox="0 0 8 4"><path d="M0 0 H8 L4 4 Z" fill="#000"/></svg>
<div class="box" style="left:1044px;top:295px;width:205.5px;height:21px;border-color:#b4b4b4;border-radius:2px;box-shadow:inset 0 1px 0 #eee"></div>
<div class="t" style="left:1052.3px;top:301.3px;font-size:9.5px;font-weight:bold">All</div>
<svg style="left:1237.5px;top:303.7px" width="8" height="4" viewBox="0 0 8 4"><path d="M0 0 H8 L4 4 Z" fill="#000"/></svg>
<div class="t" style="left:1044.2px;top:328.5px;font-size:10px;font-weight:bold">Type</div>
<div class="box" style="left:1134.3px;top:322px;width:115.20000000000005px;height:21.5px;border-color:#b4b4b4;border-radius:2px;box-shadow:inset 0 1px 0 #eee"></div>
<div class="t" style="left:1159.7px;top:328.5px;font-size:9.5px;font-weight:bold"></div>
<svg style="left:1237.5px;top:330.95px" width="8" height="4" viewBox="0 0 8 4"><path d="M0 0 H8 L4 4 Z" fill="#000"/></svg>
<svg style="left:1142px;top:326px" width="14" height="13" viewBox="0 0 14 13"><rect x="0" y="8" width="3" height="5" fill="#111"/><rect x="3.8" y="5" width="3" height="8" fill="#111"/><rect x="7.6" y="2.5" width="2.3" height="10.5" fill="#111"/><rect x="10.6" y="0" width="3" height="13" fill="#111"/></svg>
<div class="t" style="left:1159.7px;top:328.6px;font-size:9.5px;font-weight:bold">Column</div>
<div class="t" style="left:1044.2px;top:356.0px;font-size:10px;font-weight:bold">Axis</div>
<div class="box" style="left:1134.3px;top:349.5px;width:115.20000000000005px;height:22.0px;border-color:#b4b4b4;border-radius:2px;box-shadow:inset 0 1px 0 #eee"></div>
<div class="t" style="left:1141.4px;top:356.3px;font-size:9.5px;font-weight:bold">Left</div>
<svg style="left:1237.5px;top:358.7px" width="8" height="4" viewBox="0 0 8 4"><path d="M0 0 H8 L4 4 Z" fill="#000"/></svg>
<div class="t" style="left:1044.2px;top:384.0px;font-size:10px;font-weight:bold">Color</div>
<div class="box" style="left:1227.5px;top:377px;width:22px;height:22px;border-color:#d8d8d8;border-radius:2px"></div>
<div class="a" style="left:1231.5px;top:382px;width:13.5px;height:13px;background:#5fae00;border:1px solid #9bcb70"></div>
<div class="t" style="left:1044.5px;top:411.5px;font-size:10px;font-weight:bold">Show Labels</div>
<div class="a" style="left:1208px;top:412.7px;width:30px;height:7px;background:#dcdcdc;border-radius:4px"></div>
<div class="a" style="left:1205.5px;top:408.7px;width:15px;height:15px;background:#555;border-radius:50%"></div>
<div class="t" style="left:1044.4px;top:444.3px;font-size:10px;font-weight:bold">Border</div>
<div class="a" style="left:1208px;top:445.1px;width:30px;height:7px;background:#dcdcdc;border-radius:4px"></div>
<div class="a" style="left:1205.5px;top:441.1px;width:15px;height:15px;background:#555;border-radius:50%"></div>
<div class="a" style="left:1031px;top:461px;width:232px;height:40px;border:5px solid #9300ff"></div>
<div class="t" style="left:1044.4px;top:476.5px;font-size:10px;font-weight:bold">Show In Legend</div>
<div class="a" style="left:1208px;top:477.7px;width:30px;height:7px;background:#dcdcdc;border-radius:4px"></div>
<div class="a" style="left:1205.5px;top:473.7px;width:15px;height:15px;background:#555;border-radius:50%"></div>
<svg style="left:1046px;top:529px" width="10" height="7" viewBox="0 0 10 7"><path d="M1 1 L5 5.5 L9 1" fill="none" stroke="#222" stroke-width="1.1"/></svg>
<svg style="left:1066px;top:525px" width="15" height="15" viewBox="0 0 15 15"><path d="M1.2 0.5 V13.5" stroke="#111" stroke-width="1.2"/><path d="M1 13.8 H14" stroke="#1a3af0" stroke-width="1.3"/><path d="M6 4 L10 9 M10 4 L6 9" stroke="#111" stroke-width="1"/></svg>
<div class="t" style="left:1091.2px;top:526.0px;font-size:13px;">Bottom Axis</div>
<div class="t" style="left:1044.5px;top:554.5px;font-size:10px;font-weight:bold">Title</div>
<div class="t" style="left:1101px;top:554px;font-size:10.2px;color:#1a1a1a;-webkit-text-stroke:0.3px #1a1a1a">Insert Title Here</div>
<div class="t" style="left:1044.5px;top:600.3px;font-size:10px;font-weight:bold">Show Labels</div>
<div class="a" style="left:1206px;top:601.5px;width:24px;height:7px;background:#a8f050;border-radius:4px"></div>
<div class="a" style="left:1222.5px;top:597.5px;width:15.5px;height:15px;background:#118a11;border-radius:50%;border:1px solid #0b6a0b"></div>
<div class="t" style="left:1048.7px;top:632.9px;font-size:10px;font-weight:bold">Rotation</div>
<div class="a" style="left:1134.4px;top:626.5px;width:115px;height:18px;border:1px solid #b4b4b4;border-bottom:0;border-radius:2px 2px 0 0;background:#fff"></div>
<div class="t" style="left:1142.4px;top:632.9px;font-size:10px;font-weight:bold">0</div>
<svg style="left:1262px;top:634.5px" width="8" height="4" viewBox="0 0 8 4"><path d="M0 0 H8 L4 4 Z" fill="#000"/></svg>
<div class="a" style="left:1036px;top:652px;width:236px;height:1px;background:#9a9a9a"></div>
<svg style="left:1281px;top:126px" width="12" height="11" viewBox="0 0 12 11"><path d="M1 0.8 L5.5 5.5 L1 10.2 M6 0.8 L10.5 5.5 L6 10.2" fill="none" stroke="#111" stroke-width="1.4"/></svg>
<svg style="left:1278.5px;top:156.5px" width="14" height="14" viewBox="0 0 14 14"><g transform="translate(7 7)"><path d="M-1.3 -6.5 H1.3 L1.8 -4.3 L3.9 -5.2 L5.2 -3.9 L4.3 -1.8 L6.5 -1.3 V1.3 L4.3 1.8 L5.2 3.9 L3.9 5.2 L1.8 4.3 L1.3 6.5 H-1.3 L-1.8 4.3 L-3.9 5.2 L-5.2 3.9 L-4.3 1.8 L-6.5 1.3 V-1.3 L-4.3 -1.8 L-5.2 -3.9 L-3.9 -5.2 L-1.8 -4.3 Z" fill="#1a8a00"/><circle r="2.6" fill="#fff"/></g></svg>
<svg style="left:1281px;top:187.5px" width="13" height="13" viewBox="0 0 13 13"><path d="M5 3 L7.5 0.8 Q9 -0.2 10.8 1.2 Q12.2 3 11 4.8 L8.5 7.3" fill="none" stroke="#111" stroke-width="1.5"/><path d="M7.8 9.8 L5.3 12 Q3.8 13 2 11.6 Q0.6 9.8 1.8 8 L4.3 5.5" fill="none" stroke="#111" stroke-width="1.5"/><path d="M4.3 8.5 L8.5 4.3" stroke="#111" stroke-width="1.3"/></svg>
<svg style="left:1279px;top:219px" width="17" height="16" viewBox="0 0 17 16"><path d="M2.5 1 H14.5 Q15.8 1 15.8 2.3 V9.5 Q15.8 10.8 14.5 10.8 H8 L4.8 14 V10.8 H2.5 Q1.2 10.8 1.2 9.5 V2.3 Q1.2 1 2.5 1 Z" fill="none" stroke="#111" stroke-width="1.4" stroke-linejoin="round"/><path d="M4 4.3 H13 M4 7.3 H13" stroke="#111" stroke-width="1.2"/></svg>
<svg style="left:1280px;top:251.5px" width="15" height="14" viewBox="0 0 15 14"><path d="M3.4 4 A5.8 5.8 0 1 1 2.5 9" fill="none" stroke="#111" stroke-width="1.5"/><path d="M0.8 1.8 L4.5 5.2 L1 6.5 Z" fill="#111"/><path d="M8 4 V7.5 L10.5 10" fill="none" stroke="#111" stroke-width="1.4"/></svg>
<svg style="left:1280px;top:282px" width="14" height="15" viewBox="0 0 14 15"><path d="M1 4.5 L3 7 L7 1" fill="none" stroke="#111" stroke-width="1.3"/><path d="M6 7.5 L12.5 14 M12.5 7.5 L6 14" stroke="#111" stroke-width="1.4"/></svg>
</body></html>
